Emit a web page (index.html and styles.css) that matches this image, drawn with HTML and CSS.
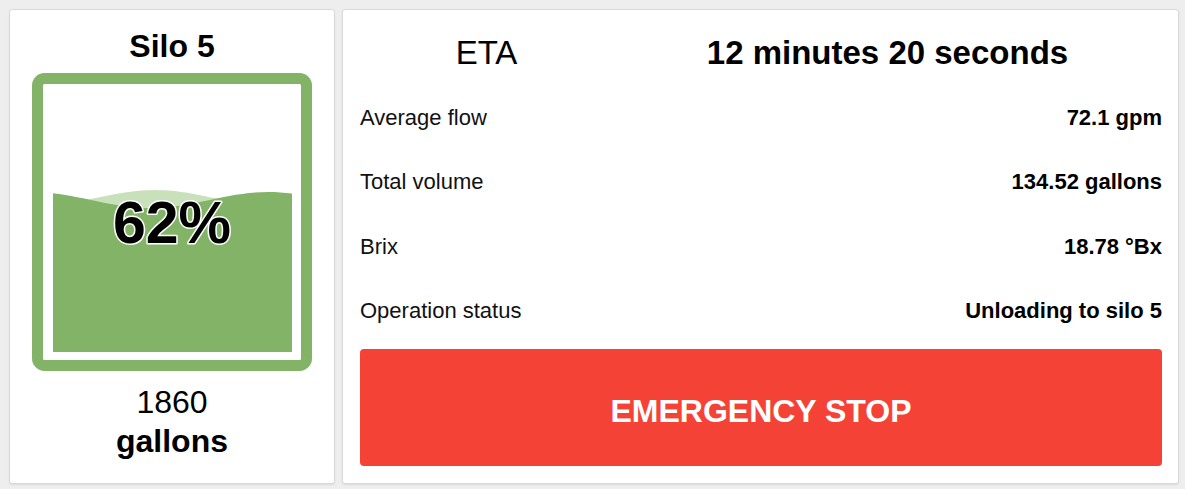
FILE: index.html
```html
<!DOCTYPE html>
<html lang="en">
<head>
<meta charset="utf-8">
<title>Silo 5</title>
<link rel="stylesheet" href="styles.css">
</head>
<body>
<div class="page">
  <section class="card silo-card">
    <h1 class="silo-title">Silo 5</h1>
    <div class="tank">
      <svg width="280" height="298" viewBox="0 0 280 298" xmlns="http://www.w3.org/2000/svg">
        <defs>
          <clipPath id="fillClip">
            <rect x="21" y="0" width="239" height="279"/>
          </clipPath>
        </defs>
        <rect x="5.5" y="5.5" width="269" height="287" rx="7" ry="7" fill="#ffffff" stroke="#83b366" stroke-width="11"/>
        <g clip-path="url(#fillClip)">
          <path fill="#c9e1bb" d="M -113 117 C -70 117 -38 133 5 133 C 48 133 80 117 123 117 C 166 117 198 133 241 133 C 284 133 316 117 359 117 L 359 300 L -113 300 Z"/>
          <path fill="#83b366" d="M 0 119 C 43 119 75 135 118 135 C 161 135 193 119 236 119 C 279 119 311 135 354 135 L 354 300 L 0 300 Z"/>
        </g>
        <text class="tank-pct" x="140" y="170" text-anchor="middle">62%</text>
      </svg>
    </div>
    <div class="silo-amount">1860</div>
    <div class="silo-unit">gallons</div>
  </section>

  <section class="card info-card">
    <div class="eta-row">
      <div class="eta-label">ETA</div>
      <div class="eta-value">12 minutes 20 seconds</div>
    </div>
    <div class="stat-row">
      <span class="stat-label">Average flow</span>
      <span class="stat-value">72.1 gpm</span>
    </div>
    <div class="stat-row">
      <span class="stat-label">Total volume</span>
      <span class="stat-value">134.52 gallons</span>
    </div>
    <div class="stat-row">
      <span class="stat-label">Brix</span>
      <span class="stat-value">18.78 °Bx</span>
    </div>
    <div class="stat-row">
      <span class="stat-label">Operation status</span>
      <span class="stat-value">Unloading to silo 5</span>
    </div>
    <button class="stop-button" type="button">EMERGENCY STOP</button>
  </section>
</div>
</body>
</html>
```

FILE: styles.css
```css
* {
  box-sizing: border-box;
}

html, body {
  margin: 0;
  padding: 0;
}

body {
  background: #eeeeee;
  font-family: "Liberation Sans", Arial, sans-serif;
  color: #111111;
  width: 1185px;
  height: 489px;
  overflow: hidden;
}

.page {
  display: flex;
  gap: 7px;
  padding: 9px 6px 5px 9px;
  height: 489px;
}

.card {
  background: #ffffff;
  border: 1px solid #d9d9d9;
  border-radius: 3px;
  box-shadow: 0 1px 2px rgba(0, 0, 0, 0.08);
}

.silo-card {
  width: 326px;
  display: flex;
  flex-direction: column;
  align-items: center;
  padding-top: 18px;
}

.silo-title {
  margin: 0;
  font-size: 32px;
  line-height: 37px;
  font-weight: bold;
  color: #000;
}

.tank {
  margin-top: 8px;
  width: 280px;
  height: 298px;
}

.tank svg {
  display: block;
}

.tank-pct {
  font-family: "Liberation Sans", Arial, sans-serif;
  font-size: 59px;
  font-weight: bold;
  fill: #000000;
  stroke: #ffffff;
  stroke-width: 3px;
  paint-order: stroke fill;
  stroke-linejoin: round;
}

.silo-amount {
  margin-top: 13px;
  font-size: 32px;
  line-height: 37px;
  color: #000;
}

.silo-unit {
  margin-top: 2px;
  font-size: 32px;
  line-height: 37px;
  font-weight: bold;
  color: #000;
}

.info-card {
  flex: 1;
  display: flex;
  flex-direction: column;
  padding: 10.5px 16px 17px 17px;
}

.eta-row {
  display: grid;
  grid-template-columns: 253px 1fr;
  align-items: center;
  height: 65px;
  font-size: 33px;
  text-align: center;
  color: #000;
}

.eta-value {
  font-weight: bold;
}

.stat-row {
  display: flex;
  justify-content: space-between;
  align-items: center;
  height: 64.5px;
  font-size: 22px;
}

.stat-label {
  color: #111;
}

.stat-value {
  font-weight: bold;
  color: #000;
}

.stop-button {
  flex: 1;
  margin-top: 5.5px;
  padding: 8px 0 0 0;
  border: none;
  border-radius: 4px;
  background: #f44336;
  color: #ffffff;
  font-family: "Liberation Sans", Arial, sans-serif;
  font-size: 32px;
  font-weight: bold;
  cursor: pointer;
}
```
